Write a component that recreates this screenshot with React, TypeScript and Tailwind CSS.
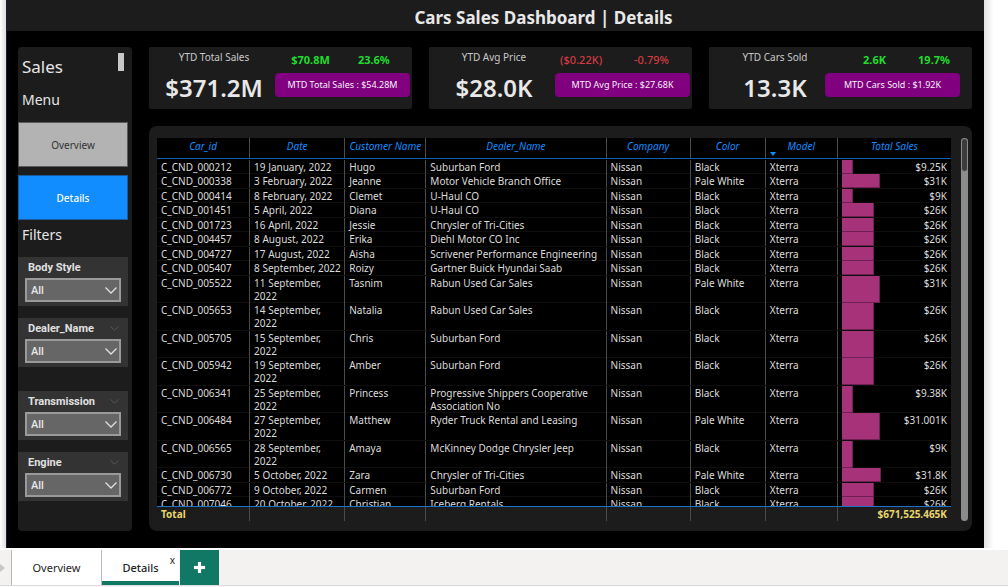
import React from "react";
import clsx from "clsx";
import { Plus } from "lucide-react";

type Kpi = {
  label: string;
  value: string;
  delta: string;
  percent: string;
  mtd: string;
  up: boolean;
  frame: string;
  heading: string;
  deltas: string;
};

const kpis: Kpi[] = [
  {
    label: "YTD Total Sales",
    value: "$371.2M",
    delta: "$70.8M",
    percent: "23.6%",
    mtd: "MTD Total Sales : $54.28M",
    up: true,
    frame: "pr-0.5",
    heading: "pl-1",
    deltas: "gap-7 pr-1",
  },
  {
    label: "YTD Avg Price",
    value: "$28.0K",
    delta: "($0.22K)",
    percent: "-0.79%",
    mtd: "MTD Avg Price : $27.68K",
    up: false,
    frame: "pr-0.5",
    heading: "pl-1",
    deltas: "gap-8 pr-4",
  },
  {
    label: "YTD Cars Sold",
    value: "13.3K",
    delta: "2.6K",
    percent: "19.7%",
    mtd: "MTD Cars Sold : $1.92K",
    up: true,
    frame: "pr-3",
    heading: "pl-4",
    deltas: "gap-8 pl-7",
  },
];

type Sale = [id: string, date: string, customer: string, dealer: string, color: string, total: string];

const sales: Sale[] = [
  ["C_CND_000212", "19 January, 2022", "Hugo", "Suburban Ford", "Black", "$9.25K"],
  ["C_CND_000338", "3 February, 2022", "Jeanne", "Motor Vehicle Branch Office", "Pale White", "$31K"],
  ["C_CND_000414", "8 February, 2022", "Clemet", "U-Haul CO", "Black", "$9K"],
  ["C_CND_001451", "5 April, 2022", "Diana", "U-Haul CO", "Black", "$26K"],
  ["C_CND_001723", "16 April, 2022", "Jessie", "Chrysler of Tri-Cities", "Black", "$26K"],
  ["C_CND_004457", "8 August, 2022", "Erika", "Diehl Motor CO Inc", "Black", "$26K"],
  ["C_CND_004727", "17 August, 2022", "Aisha", "Scrivener Performance Engineering", "Black", "$26K"],
  ["C_CND_005407", "8 September, 2022", "Roizy", "Gartner Buick Hyundai Saab", "Black", "$26K"],
  ["C_CND_005522", "11 September, 2022", "Tasnim", "Rabun Used Car Sales", "Pale White", "$31K"],
  ["C_CND_005653", "14 September, 2022", "Natalia", "Rabun Used Car Sales", "Black", "$26K"],
  ["C_CND_005705", "15 September, 2022", "Chris", "Suburban Ford", "Black", "$26K"],
  ["C_CND_005942", "19 September, 2022", "Amber", "Suburban Ford", "Black", "$26K"],
  ["C_CND_006341", "25 September, 2022", "Princess", "Progressive Shippers Cooperative Association No", "Black", "$9.38K"],
  ["C_CND_006484", "27 September, 2022", "Matthew", "Ryder Truck Rental and Leasing", "Pale White", "$31.001K"],
  ["C_CND_006565", "28 September, 2022", "Amaya", "McKinney Dodge Chrysler Jeep", "Black", "$9K"],
  ["C_CND_006730", "5 October, 2022", "Zara", "Chrysler of Tri-Cities", "Pale White", "$31.8K"],
  ["C_CND_006772", "9 October, 2022", "Carmen", "Suburban Ford", "Black", "$26K"],
  ["C_CND_007046", "20 October, 2022", "Christian", "Iceberg Rentals", "Black", "$26K"],
];

const columns = ["Car_id", "Date", "Customer Name", "Dealer_Name", "Company", "Color", "Model", "Total Sales"];
const rowGrid = "grid grid-cols-[93fr_95fr_81fr_180fr_84fr_75fr_72fr_113fr]";
const cell = "min-w-0 border-r border-[#4a4a4a] pl-1 pt-px";
const BAR_SCALE_MAX = 86;

function KpiCard({ kpi }: { kpi: Kpi }) {
  return (
    <section className={clsx("flex rounded-xs bg-[#1c1c1c]", kpi.frame)}>
      <div className={clsx("flex flex-1 flex-col items-center pt-1", kpi.heading)}>
        <h2 className="text-[10px] leading-3 text-[#c8c8c8]">{kpi.label}</h2>
        <p className="pt-[9px] text-2xl font-semibold text-[#e8e8e8]">{kpi.value}</p>
      </div>
      <div className="w-[135px]">
        <p
          className={clsx(
            "flex justify-center pt-1.5 text-[11px] leading-[14px]",
            kpi.up ? "font-bold text-[#1fdd2b]" : "font-medium text-[#d13b40]",
            kpi.deltas,
          )}
        >
          <span>{kpi.delta}</span>
          <span>{kpi.percent}</span>
        </p>
        <p className="mt-1.5 rounded bg-[#800080] text-center text-[9px] leading-6 text-[#f8f0f8]">{kpi.mtd}</p>
      </div>
    </section>
  );
}

function Chevron({ className }: { className: string }) {
  return (
    <svg viewBox="0 0 12 7" className={clsx("fill-none", className)} strokeWidth="1.3">
      <path d="M0.5 0.5 6 6 11.5 0.5" />
    </svg>
  );
}

function Slicer({ id, label, menu }: { id: string; label: string; menu: boolean }) {
  return (
    <div className="mr-1 bg-[#333333] px-[7px] pb-1 pt-0.5">
      <div className="flex h-4 items-center justify-between pl-[3px] pr-0.5">
        <label htmlFor={id} className="font-[Roboto,sans-serif] text-[11px] font-bold leading-[13px] text-[#e0e0e0]">
          {label}
        </label>
        {menu && <Chevron className="h-[5px] w-[9px] stroke-[#5c5c5c]" />}
      </div>
      <div className="relative mt-[3px]">
        <select
          id={id}
          className="block h-6 w-full appearance-none rounded-none border-2 border-[#9a9a9a] bg-[#666666] pl-1 pt-0.5 font-[Roboto,sans-serif] text-[11px] font-medium text-[#e6e6e6]"
        >
          <option>All</option>
        </select>
        <Chevron className="pointer-events-none absolute right-1 top-[9px] h-[7px] w-3 stroke-[#e0e0e0]" />
      </div>
    </div>
  );
}

function Sidebar() {
  return (
    <aside className="w-[114px] shrink-0 rounded-sm bg-[#1c1c1c]">
      <div className="flex items-start justify-between pr-2 pt-1.5 text-[#e6e6e6]">
        <h2 className="pl-1 pt-0.5 text-[17px] leading-6">Sales</h2>
        <div className="h-[18px] w-1.5 bg-[#c8c8c8]" />
      </div>
      <h3 className="pl-1 pt-[11px] text-sm leading-5 text-[#e6e6e6]">Menu</h3>
      <nav className="mr-1 flex flex-col gap-2 pt-3 text-[10px]">
        <button type="button" className="h-[45px] border border-[#5a5a5a] bg-[#b3b3b3] pt-0.5 text-[#333333]">
          Overview
        </button>
        <button type="button" className="h-[45px] border border-[#1a5c9c] bg-[#118dff] pt-0.5 font-medium text-white">
          Details
        </button>
      </nav>
      <h3 className="pb-3 pl-1 pt-[5px] text-sm leading-5 text-[#e6e6e6]">Filters</h3>
      <div className="flex flex-col gap-3">
        <Slicer id="body-style" label="Body Style" menu={false} />
        <Slicer id="dealer-name" label="Dealer_Name" menu />
        <div className="pt-3">
          <Slicer id="transmission" label="Transmission" menu />
        </div>
        <Slicer id="engine" label="Engine" menu />
      </div>
    </aside>
  );
}

function SalesRow({ sale, index }: { sale: Sale; index: number }) {
  const [id, date, customer, dealer, color, total] = sale;
  const tall = index >= 8 && index <= 14;
  const even = index % 2 === 0;
  const height = tall ? (even ? "h-[27px]" : "h-7") : even ? "h-3.5" : "h-[15px]";
  const amount = parseFloat(total.slice(1));
  return (
    <tr className={clsx(rowGrid, height, "border-b border-[#0e0e0e]")}>
      {[id, date, customer, dealer, "Nissan", color, "Xterra"].map((text, i) => (
        <td key={i} className={clsx(cell, !tall && "whitespace-nowrap")}>
          {text}
        </td>
      ))}
      <td className="flex justify-between pl-1 pr-1">
        <div
          className="border-b border-r border-[#6d2153] bg-[#a6327a]"
          style={{ width: `${(amount / BAR_SCALE_MAX) * 100}%` }}
        />
        <span className="pt-px">{total}</span>
      </td>
    </tr>
  );
}

function SalesTable() {
  return (
    <section className="flex min-h-0 flex-1 gap-2.5 rounded-lg bg-[#1c1c1c] pb-2.5 pl-2 pr-1 pt-3">
      <table className="flex min-w-0 flex-1 flex-col text-[10px] leading-[13px] text-[#dcdcdc]">
        <thead className="block border-b border-[#0f5fae] bg-black text-[#118dff]">
          <tr className={clsx(rowGrid, "h-5")}>
            {columns.map((name) => (
              <th
                key={name}
                className="relative whitespace-nowrap border-r border-[#4a4a4a] pt-0.5 text-center font-normal italic last:border-r-0"
              >
                {name}
                {name === "Model" && (
                  <svg viewBox="0 0 6 4" className="absolute bottom-0.5 left-1 h-1 w-1.5 fill-[#118dff]">
                    <path d="M0 0h6L3 4z" />
                  </svg>
                )}
              </th>
            ))}
          </tr>
        </thead>
        <tbody className="block min-h-0 flex-1 overflow-hidden bg-black pt-px">
          {sales.map((sale, i) => (
            <SalesRow key={sale[0]} sale={sale} index={i} />
          ))}
        </tbody>
        <tfoot className="block border-t border-[#1a73c9] font-bold text-[#e8d66b]">
          <tr className={clsx(rowGrid, "h-3.5")}>
            <td className={cell}>Total</td>
            <td className={cell} />
            <td className={cell} />
            <td className={cell} />
            <td className={cell} />
            <td className={cell} />
            <td className={cell} />
            <td className="pr-1 pt-px text-right">$671,525.465K</td>
          </tr>
        </tfoot>
      </table>
      <div className="w-[7px] rounded bg-[#8c8c8c]">
        <div className="h-[34px] rounded border border-[#8c8c8c] bg-[#3c3c3c]" />
      </div>
    </section>
  );
}

function PageTabs() {
  return (
    <footer className="shrink-0 border-t-2 border-white bg-[#f8f8f8]">
      <div className="mb-px flex h-9 items-stretch border-b border-[#dcdcdc] bg-[#f3f2f1] text-[11px] text-[#252423]">
        <div className="flex w-[11px] items-center">
          <svg viewBox="0 0 5 8" className="h-2 w-[5px] fill-[#c8c6c4]">
            <path d="M0 0 5 4 0 8z" />
          </svg>
        </div>
        <button type="button" className="w-[91px] border-x border-[#b8b8b8] bg-white pt-0.5">
          Overview
        </button>
        <div className="relative flex w-[77px] border-b-4 border-[#117865] bg-white">
          <button type="button" className="flex-1 pt-1.5 font-medium">
            Details
          </button>
          <button type="button" aria-label="Close Details" className="absolute right-1 top-0.5 text-[10px] leading-4">
            x
          </button>
        </div>
        <button
          type="button"
          aria-label="New page"
          className="ml-px flex w-[39px] items-center justify-center bg-[#117865] text-white"
        >
          <Plus className="size-[19px]" strokeWidth={4} strokeLinecap="butt" />
        </button>
      </div>
    </footer>
  );
}

export default function App() {
  return (
    <div className="flex h-screen flex-col bg-white font-['Noto_Sans','Open_Sans',sans-serif]">
      <div className="flex min-h-0 flex-1">
        <div className="w-1.5 bg-linear-to-r from-white to-[#dddddd]" />
        <main className="flex min-w-0 flex-1 flex-col border-l border-[#1a2036] bg-black">
          <header className="flex h-[31px] shrink-0 items-center justify-center bg-[#1c1c1c] pl-24 pt-1">
            <h1 className="text-[17px] font-bold leading-6 text-[#e8e8e8]">Cars Sales Dashboard | Details</h1>
          </header>
          <div className="flex min-h-0 flex-1 gap-[17px] pb-[17px] pl-[11px] pr-3 pt-4">
            <Sidebar />
            <div className="flex min-w-0 flex-1 flex-col gap-[17px]">
              <div className="grid h-[62px] shrink-0 grid-cols-3 gap-[17px]">
                {kpis.map((kpi) => (
                  <KpiCard key={kpi.label} kpi={kpi} />
                ))}
              </div>
              <SalesTable />
            </div>
          </div>
        </main>
        <div className="w-6 bg-linear-to-r from-[#e2e2e2] via-white via-40% to-white" />
      </div>
      <PageTabs />
    </div>
  );
}
